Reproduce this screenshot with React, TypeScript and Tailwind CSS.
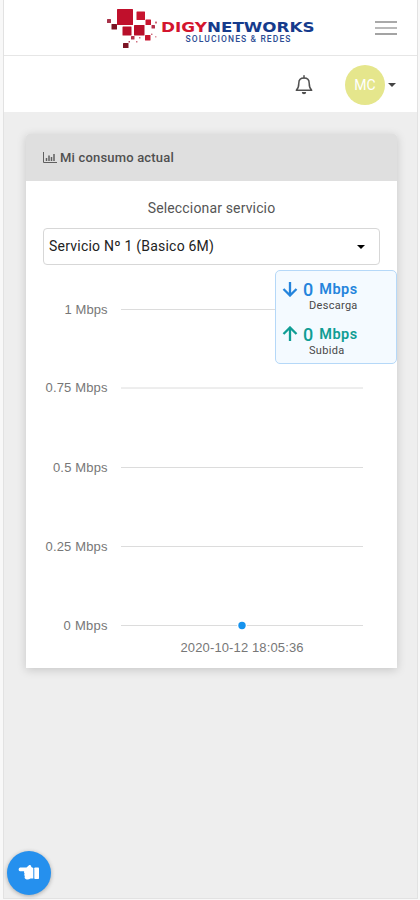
import React from 'react';

const logoSquares = [
  { x: 17, y: 9, size: 16, fill: '#c0102c' },
  { x: 36.5, y: 11.5, size: 8.5, fill: '#c8152f' },
  { x: 22.5, y: 26.5, size: 9, fill: '#b80f2a' },
  { x: 34, y: 25, size: 10.5, fill: '#b80f2a' },
  { x: 45.5, y: 19.5, size: 5.5, fill: '#c8152f' },
  { x: 11.5, y: 24, size: 5.5, fill: '#7c1424' },
  { x: 7, y: 19, size: 4, fill: '#a8344a' },
  { x: 45, y: 35, size: 5.5, fill: '#c8152f' },
  { x: 51.5, y: 25, size: 3.5, fill: '#b3304a' },
  { x: 55, y: 21.5, size: 2, fill: '#cc6677' },
  { x: 31, y: 36, size: 3.5, fill: '#b3304a' },
  { x: 23, y: 43, size: 5.5, fill: '#7c1424' },
  { x: 28.5, y: 41, size: 1.5, fill: '#a8344a' },
  { x: 36, y: 41, size: 1.5, fill: '#cc6677' },
  { x: 39, y: 37, size: 1.5, fill: '#cc6677' },
  { x: 51, y: 33.5, size: 1.5, fill: '#cc6677' },
  { x: 55, y: 36, size: 1.5, fill: '#dd8d99' },
];

const gridLines = [
  { label: '1 Mbps', y: 309.5, width: 43 },
  { label: '0.75 Mbps', y: 388, width: 62 },
  { label: '0.5 Mbps', y: 467.5, width: 54.5 },
  { label: '0.25 Mbps', y: 546.5, width: 62 },
  { label: '0 Mbps', y: 625.5, width: 44 },
];

const Logo: React.FC = () => (
  <svg width="216" height="48" viewBox="0 0 216 48" aria-label="Digynetworks">
    {logoSquares.map((s) => (
      <rect key={`${s.x}-${s.y}`} x={s.x - 1} y={s.y} width={s.size} height={s.size} rx="0.5" fill={s.fill} />
    ))}
    <g fontFamily="'DejaVu Sans', sans-serif" fontWeight="700" fontSize="14.5">
      <text x="60" y="32" fill="#d3152e" textLength="46" lengthAdjust="spacingAndGlyphs">DIGY</text>
      <text x="106" y="32" fill="#163b8c" textLength="107.500" lengthAdjust="spacingAndGlyphs">NETWORKS</text>
    </g>
    <text x="84.500" y="42" fontFamily="Roboto, sans-serif" fontWeight="500" fontSize="8.500" fill="#2c4c94" textLength="105">
      SOLUCIONES &amp; REDES
    </text>
  </svg>
);

const TopBar: React.FC = () => (
  <header className="flex h-14 items-start justify-end border-b border-[#e6e6e6] bg-white pr-5">
    <Logo />
    <button className="ml-[58px] mt-[21px] flex w-[22px] flex-col gap-1">
      <span className="h-0.5 bg-[#a9a9a9]" />
      <span className="h-0.5 bg-[#b9b9b9]" />
      <span className="h-0.5 bg-[#a3a3a3]" />
    </button>
  </header>
);

const UserBar: React.FC = () => (
  <div className="flex h-14 items-center justify-end bg-white pr-[21px] pt-px">
    <svg className="mt-px" width="18" height="20" viewBox="0 0 18 20" fill="none" stroke="#505050" strokeWidth="1.5" strokeLinejoin="round">
      <path d="M1.300 15.200c1.600-1.500 2.500-2.500 2.500-7C3.800 5 6 3 9 3s5.200 2 5.200 5.200c0 4.500.9 5.500 2.500 7z" />
      <path d="M9 .8V3" strokeLinecap="round" />
      <path d="M6.800 17h4.400a2.200 2.200 0 0 1-4.400 0z" fill="#505050" stroke="none" />
    </svg>
    <div className="ml-8 flex size-10 items-center justify-center rounded-full bg-[#e5e68c] pt-px text-[14px] text-white">MC</div>
    <span className="ml-[3px] border-x-4 border-t-4 border-x-transparent border-t-[#444]" />
  </div>
);

const Speed: React.FC<{ label: string; color: string; path: string }> = ({ label, color, path }) => (
  <div className="w-[84px]">
    <div className={`flex h-[18px] items-center font-medium ${color}`}>
      <svg width="16" height="16" viewBox="0 0 16 16" fill="none" stroke="currentColor" strokeWidth="2.300">
        <path d={path} />
      </svg>
      <span className="ml-[5px] text-[18px]">0</span>
      <span className="ml-[6px] pt-0.5 text-[14.5px] font-semibold tracking-[0.5px]">Mbps</span>
    </div>
    <div className="pl-[27px] text-[11px] leading-[15px] tracking-[0.3px] text-[#484848]">{label}</div>
  </div>
);

const SpeedPanel: React.FC = () => (
  <div className="absolute right-0 top-[136px] flex h-[94px] w-[122px] flex-col gap-[12px] rounded-[5px] border border-[#b5d8f8] bg-[#f4faff] pl-[6px] pt-[9px]">
    <Speed label="Descarga" color="text-[#2484dc]" path="M8 1v13M1.500 8 8 14.500 14.500 8" />
    <Speed label="Subida" color="text-[#0f9d94]" path="M8 15V2M1.500 8 8 1.500 14.500 8" />
  </div>
);

const UsageChart: React.FC = () => (
  <svg className="block" width="371" height="403" viewBox="26 265 371 403" fontFamily="'Liberation Sans', sans-serif" fill="#777777">
    {gridLines.map((line) => (
      <g key={line.label}>
        <text x={107.5 - line.width} y={line.y + 4} fontSize="13" textLength={line.width}>{line.label}</text>
        <path d={`M121 ${line.y}H363`} stroke="#dcdcdc" />
      </g>
    ))}
    <circle cx="242" cy="625.500" r="5" fill="white" />
    <circle cx="242" cy="625.500" r="3.700" fill="#1693ee" />
    <text x="242" y="651.500" fontSize="13" textAnchor="middle" textLength="123">2020-10-12 18:05:36</text>
  </svg>
);

const App: React.FC = () => {
  return (
    <div className="h-[900px] w-[420px] bg-[#f8f8f8] pl-[3px] pr-[2px] font-['Roboto',sans-serif]">
      <div className="flex h-[899px] flex-col border-x border-b border-[#e2e2e2] bg-[#eeeeee]">
        <TopBar />
        <UserBar />
        <main className="flex flex-1 flex-col pl-[22px] pr-[20px] pt-[22px]">
          <section className="relative h-[534px] rounded-t-[3px] bg-white shadow-[0_2px_10px_rgba(0,0,0,0.17)]">
            <h2 className="flex h-[47px] items-center rounded-t-[3px] bg-[#dfdfdf] pl-[17px] text-[13px] font-medium tracking-[0.18px] text-[#505050]">
              <svg className="mr-[3px]" width="14" height="11" viewBox="0 0 14 11" fill="none" stroke="#606060">
                <path d="M.5 0v10.500H14" />
                <path d="M3.500 6v3M6 3.500V9M8.500 5v4M11 2v7" strokeWidth="1.500" />
              </svg>
              Mi consumo actual
            </h2>
            <div className="flex h-[84px] flex-col px-[17px] pt-[17px]">
              <label className="text-center text-[14px] leading-5 tracking-[0.15px] text-[#555]">Seleccionar servicio</label>
              <button className="mt-[10px] flex h-[37px] shrink-0 items-center justify-between rounded-[4px] border border-[#d7d7d7] pl-[5px] pr-[14px] text-[14px] tracking-[0.22px] text-[#222]">
                Servicio Nº 1 (Basico 6M)
                <span className="border-x-4 border-t-4 border-x-transparent border-t-black" />
              </button>
            </div>
            <UsageChart />
            <SpeedPanel />
          </section>
          <button className="-ml-[19px] mb-[3px] mt-auto flex size-11 items-center justify-center rounded-full bg-[#2590ee] text-white shadow-[0_1px_4px_rgba(0,0,0,0.3)]">
            <svg width="22" height="18" viewBox="0 0 22 18" fill="currentColor">
              <path d="M2 3.500h6.500L11 1.300c1-.8 2.600.1 2.200 1.600L15.300 4v10.500h-2.800c-1.500 1.200-4.500 1.300-5.200.2-.8-.8-.9-1.700-.4-2.500-.8-.8-.8-1.900-.3-2.700-.6-.6-.7-1.400-.4-2.200H2a2 2 0 0 1 0-3.800z" />
              <rect x="16.300" y="3.500" width="4.700" height="11.500" rx="0.800" />
            </svg>
          </button>
        </main>
      </div>
    </div>
  );
};

export default App;
